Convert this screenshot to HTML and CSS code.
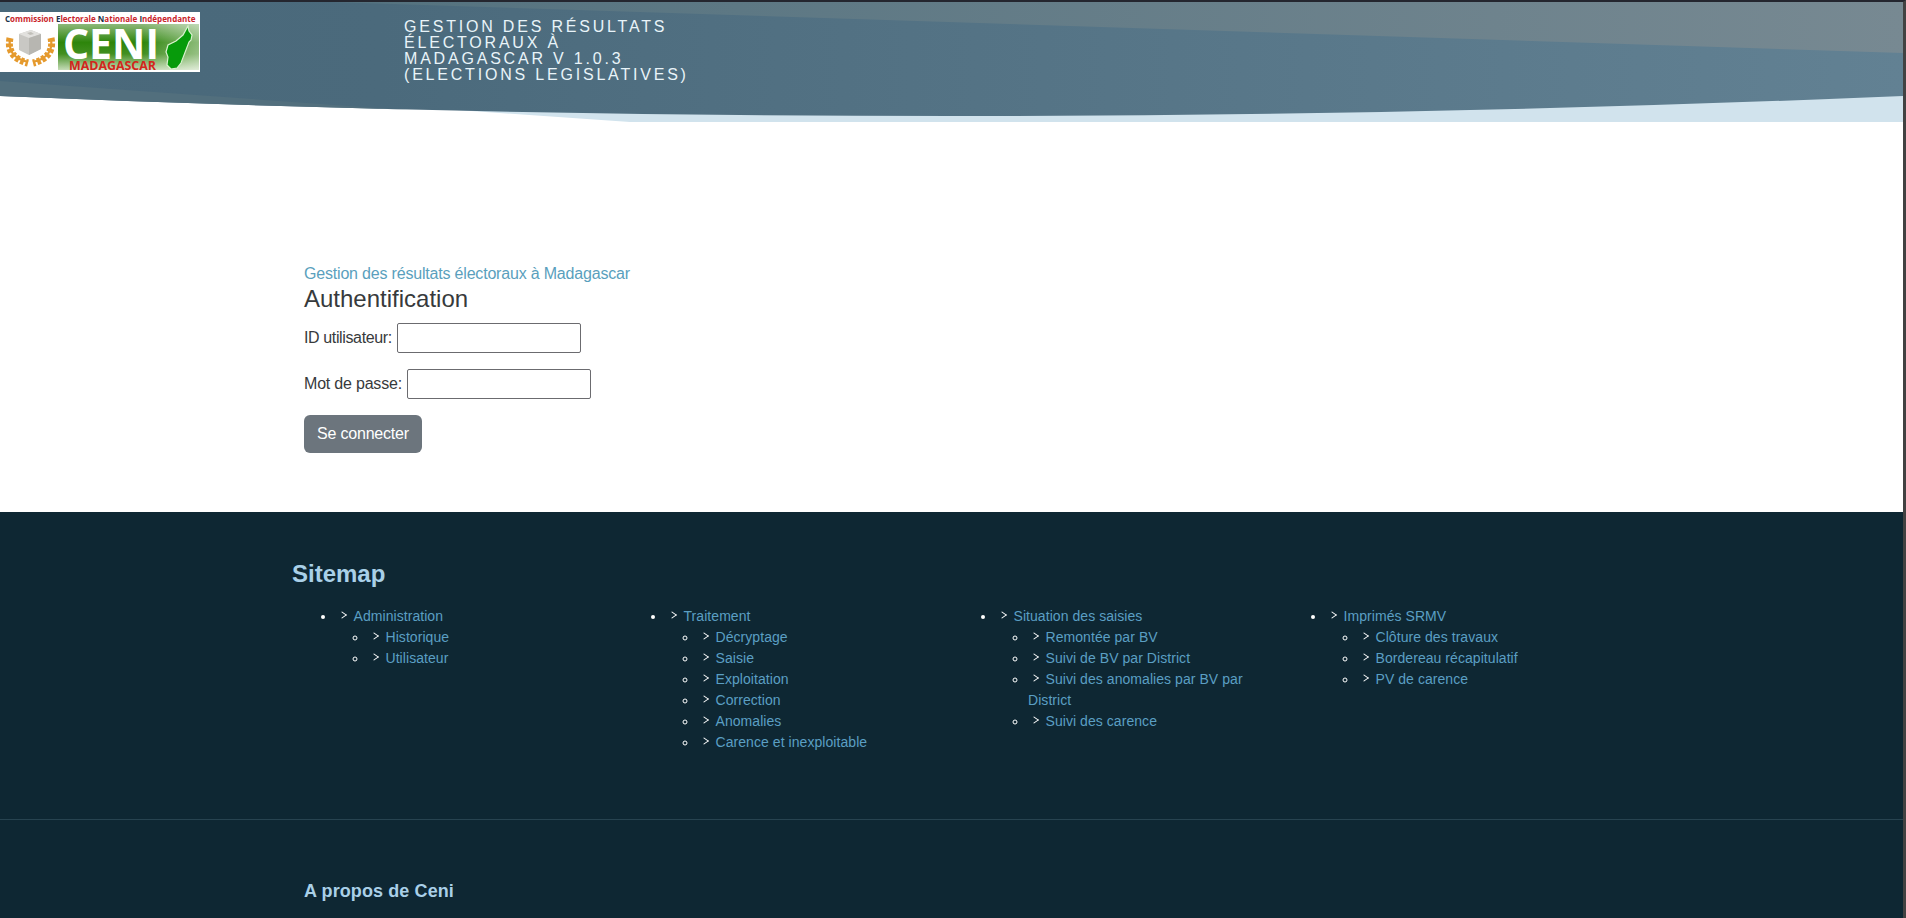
FILE: index.html
```html
<!DOCTYPE html>
<html lang="fr">
<head>
<meta charset="utf-8">
<title>CENI Madagascar</title>
<link rel="stylesheet" href="styles.css">
</head>
<body>
<div class="page">
<header class="header">
  <svg class="header-bg" viewBox="0 0 1903 120" preserveAspectRatio="none">
    <defs>
      <linearGradient id="g" x1="0" x2="1"><stop offset="0" stop-color="#49687a"/><stop offset=".2" stop-color="#4b6a7c"/><stop offset="1" stop-color="#628193"/></linearGradient>
      <linearGradient id="h" x1="0" x2="1"><stop offset="0" stop-color="#54727f"/><stop offset="1" stop-color="#778992"/></linearGradient>
      <clipPath id="c"><path d="M0 0H1903V94Q951 134 0 94Z"/></clipPath>
    </defs>
    <path d="M300 97L630 120H1903V80Z" fill="#d1e3ed"/>
    <path d="M0 0H1903V94Q951 134 0 94Z" fill="url(#g)"/>
    <path d="M330 0H1903V51Z" fill="url(#h)"/>
    <path d="M0 79L420 109V120H0Z" fill="#526f7d" clip-path="url(#c)"/>
  </svg>
  <div class="brand">
    <svg class="logo" viewBox="0 0 200 60" role="img">
      <defs>
        <linearGradient id="v" x1="0" x2="0" y1="0" y2="1"><stop offset="0" stop-color="#8db97a"/><stop offset=".4" stop-color="#2d850b"/><stop offset=".65" stop-color="#428f21"/><stop offset="1" stop-color="#c6dcb8"/></linearGradient>
        <linearGradient id="w" x1="0" x2="1"><stop offset=".6" stop-color="#fff" stop-opacity="0"/><stop offset="1" stop-color="#fff" stop-opacity=".45"/></linearGradient>
      </defs>
      <path d="M0 0H200V60H0Z" fill="#fff"/>
      <path d="M58 12H199V58H58Z" fill="url(#v)"/>
      <path d="M58 12H199V58H58Z" fill="url(#w)"/>
      <text class="logo-top" x="5" y="10"><tspan class="cap">C</tspan>ommission <tspan class="cap">E</tspan>lectorale <tspan class="cap">N</tspan>ationale <tspan class="cap">I</tspan>ndépendante</text>
      <path d="M19 22L31 18L41 22V37L29 43L19 38Z" fill="#c9c8c4"/>
      <path d="M19 22L31 18L41 22L29 26Z" fill="#e2e1de"/>
      <path d="M29 26L41 22V37L29 43Z" fill="#b7b6b1"/>
      <path d="M27 21L31 20L34 22L30 23Z" fill="#c0bfb9"/>
      <g fill="none" stroke="#e59a2e">
        <path d="M10 27Q7 45 28 50M51 27Q54 45 33 50" stroke-width="2.200"/>
        <path d="M10 26Q6 45 28 51M51 26Q55 45 33 51" stroke-width="7" stroke-dasharray="3.600 1.800"/>
      </g>
      <text class="logo-ceni" x="63" y="46.500" textLength="96" lengthAdjust="spacingAndGlyphs">CENI</text>
      <text class="logo-mada" x="69" y="57.500" textLength="87" lengthAdjust="spacingAndGlyphs">MADAGASCAR</text>
      <path d="M188 14L189 19L192 23L191 28L189 30L181 51L177 56L171 57L167 53L168 45L166 40L168 33L176 29L183 23Z" fill="#079b0b" stroke="#d9f2ce" stroke-width="1.200"/>
    </svg>
    <h1 class="title">Gestion des résultats<br>électoraux à<br>Madagascar V 1.0.3<br>(ELECTIONS LEGISLATIVES)</h1>
  </div>
</header>
<main class="main">
  <a class="crumb">Gestion des résultats électoraux à Madagascar</a>
  <h2 class="auth">Authentification</h2>
  <form>
    <div class="field"><label class="label-id" for="u">ID utilisateur:</label><input id="u" type="text"></div>
    <div class="field"><label for="p">Mot de passe:</label><input id="p" type="password"></div>
    <button class="btn" type="button">Se connecter</button>
  </form>
</main>
<footer class="footer">
  <section class="sitemap">
    <h2 class="map-title">Sitemap</h2>
    <div class="cols">
      <ul><li><a>Administration</a><ul><li><a>Historique</a></li><li><a>Utilisateur</a></li></ul></li></ul>
      <ul><li><a>Traitement</a><ul><li><a>Décryptage</a></li><li><a>Saisie</a></li><li><a>Exploitation</a></li><li><a>Correction</a></li><li><a>Anomalies</a></li><li><a>Carence et inexploitable</a></li></ul></li></ul>
      <ul><li><a>Situation des saisies</a><ul><li><a>Remontée par BV</a></li><li><a>Suivi de BV par District</a></li><li><a>Suivi des anomalies par BV par District</a></li><li><a>Suivi des carence</a></li></ul></li></ul>
      <ul><li><a>Imprimés SRMV</a><ul><li><a>Clôture des travaux</a></li><li><a>Bordereau récapitulatif</a></li><li><a>PV de carence</a></li></ul></li></ul>
    </div>
  </section>
  <section class="about"><h3 class="about-title">A propos de Ceni</h3></section>
</footer>
</div>
</body>
</html>
```
FILE: styles.css
```css
* { box-sizing: border-box; }
body { margin: 0; height: 918px; overflow: hidden; background: #fff; color: #373a3c; font: 16px/24px "Liberation Sans", Arial, sans-serif; }
.page { height: 918px; overflow: hidden; border-top: 2px solid #24262f; border-right: 3px solid #424242; display: flex; flex-direction: column; }
h1, h2, h3, ul { margin: 0; }
.header { position: relative; height: 120px; flex: none; }
.header-bg { position: absolute; inset: 0; width: 100%; height: 120px; }
.brand { position: relative; display: flex; padding-top: 10px; }
.logo { width: 200px; height: 60px; flex: none; }
.logo-top { font: bold 8px "Open Sans", sans-serif; fill: #c9242b; }
.cap { fill: #20324a; }
.logo-ceni { font: bold 42px "Open Sans", sans-serif; fill: #fff; }
.logo-mada { font: bold 13px "Open Sans", sans-serif; fill: #d3261c; }
.title { margin: 7px 0 0 204px; font-size: 16px; line-height: 16px; font-weight: 400; letter-spacing: 2.8px; text-transform: uppercase; color: #e9f4f9; white-space: nowrap; }
.main { height: 390px; flex: none; padding: 140px 0 0 304px; }
.crumb { display: block; color: #5a9fbd; letter-spacing: -0.19px; }
.auth { font-size: 24px; line-height: 26px; font-weight: 400; margin-bottom: 11px; }
.field { display: flex; align-items: center; gap: 5px; height: 30px; margin-bottom: 16px; letter-spacing: -0.2px; }
.label-id { letter-spacing: -0.37px; }
.field input { width: 184px; height: 30px; border: 1px solid #6b6b6f; border-radius: 2px; background: #fff; padding: 1px 2px; }
.btn { display: block; width: 118px; height: 38px; border: 0; border-radius: 6px; background: #6c757d; color: #fff; font: inherit; letter-spacing: -0.2px; padding: 0; }
.footer { flex: 1; background: #0e2733; color: #fff; }
.sitemap { height: 308px; padding: 48px 0 0 292px; border-bottom: 1px solid #274350; }
.map-title { color: #a9d0e8; font-size: 24px; line-height: 28px; }
.cols { display: grid; grid-template-columns: repeat(4, 330px); margin-top: 18px; font-size: 14px; line-height: 21px; letter-spacing: 0.06px; }
.cols ul { padding-left: 44px; }
.cols ul ul { padding-left: 32px; padding-right: 26px; }
.cols a { color: #5b9fc3; }
.cols li::before { content: ""; display: inline-block; width: 5px; height: 5px; border: solid #fff; border-width: 1.500px 1.500px 0 0; transform: rotate(45deg) skew(-10deg, -10deg); margin: 0 9px 3px 2.500px; }
.about { padding: 60px 0 0 304px; }
.about-title { color: #a9d0e8; font-size: 18px; line-height: 22px; letter-spacing: 0.1px; }
```
